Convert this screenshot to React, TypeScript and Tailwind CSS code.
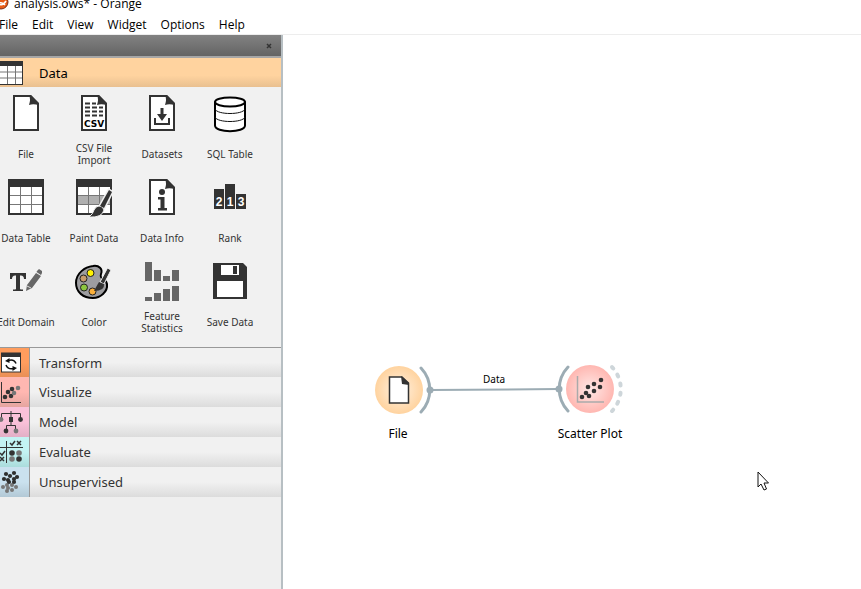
import type { ReactNode } from "react";

const INK = "#333333";

function Page({ children }: { children?: ReactNode }) {
  return (
    <>
      <path d="M8 3H24.5L32 10.500V37H8Z" fill="#fff" stroke={INK} strokeWidth="2" />
      <path d="M23 2H25L33 10.500V12.500Q28 10.500 23 12Q25 6 23 2Z" fill={INK} />
      {children}
    </>
  );
}

function TableGrid({ shaded = false }: { shaded?: boolean }) {
  return (
    <>
      <rect x="2" y="2" width="36" height="36" fill={INK} />
      <rect x="4" y="10" width="32" height="26" fill="#fff" />
      {shaded && <rect x="4" y="19" width="32" height="8" fill="#b0b0b0" />}
      <path d="M14.500 10V36M25.500 10V36M4 18.500H36M4 27.500H36" stroke="#777" fill="none" />
    </>
  );
}

function Brush() {
  return (
    <>
      <path d="M35 13L38 15L30 31L26 29Z" fill={INK} stroke="#f1f1f1" strokeWidth="3" />
      <path d="M25 29Q29 29 30 33Q28 41 15 40Q19 37 20 33Q22 29 25 29Z" fill={INK} stroke="#f1f1f1" />
      <path d="M35 13L38 15L30 31L26 29Z" fill={INK} />
    </>
  );
}

const icons: Record<string, ReactNode> = {
  File: <Page />,
  "CSV File Import": (
    <Page>
      <path d="M11 10.500H22M11 14.500H29M11 18.500H29M11 22.500H29" stroke={INK} strokeWidth="2" strokeDasharray="5 2" />
      <text x="20" y="34" textAnchor="middle" fill="#000" className="font-['DejaVu_Sans'] text-[9px] font-bold">CSV</text>
    </Page>
  ),
  Datasets: (
    <Page>
      <path d="M18.500 15H21.500V21H25L20 28L15 21H18.500Z" fill={INK} />
      <path d="M13 25V31H27V25" stroke={INK} strokeWidth="2" fill="none" />
    </Page>
  ),
  "SQL Table": (
    <>
      <path d="M5 8.500V32.500C5 40 35 40 35 32.500V8.500" fill="#fff" stroke="#000" strokeWidth="2" />
      <ellipse cx="20" cy="9" rx="15" ry="4.500" fill="#fff" stroke="#000" strokeWidth="2" />
      <path d="M5 16C7 22 33 22 35 16M5 24C7 30 33 30 35 24" fill="none" stroke="#111" />
    </>
  ),
  "Data Table": <TableGrid />,
  "Paint Data": (
    <>
      <TableGrid shaded />
      <Brush />
    </>
  ),
  "Data Info": (
    <Page>
      <circle cx="20" cy="15" r="3" fill={INK} />
      <path d="M16 20H22.500V31H25V33.500H16V31H18.500V22.500H16Z" fill={INK} />
    </Page>
  ),
  Rank: (
    <>
      <path d="M4 12H14V32H4ZM15 7H25V32H15ZM26 17H36V32H26Z" fill={INK} />
      <g fill="#fff" textAnchor="middle" className="font-['Liberation_Sans'] text-[12px] font-bold">
        <text x="9" y="29">2</text>
        <text x="20" y="29">1</text>
        <text x="31" y="29">3</text>
      </g>
    </>
  ),
  "Edit Domain": (
    <>
      <path d="M4 12H20V18H18Q18 14 14 14.500V28Q14 28.500 17 28.500V30H7V28.500Q10 28.500 10 28V14.500Q6 14 6 18H4Z" fill={INK} />
      <path d="M20 30L21 24L30 12L35 15L26 27ZM31 10L33 8L36 10V12L35 14L30.500 11Z" fill="#666" />
      <path d="M21 25L25 27" stroke="#ddd" />
    </>
  ),
  Color: (
    <>
      <path d="M19 5C25 4 29 8 27 13C25 19 32 17 33 23C34 31 26 37 19 37C9 37 2 31 2 22C2 12 11 6 19 5Z" fill="#9d9da0" stroke="#000" strokeWidth="2" />
      <g stroke="#222">
        <circle cx="16.500" cy="12" r="3.500" fill="#fff200" />
        <circle cx="9.500" cy="17.500" r="3.500" fill="#c69c6d" />
        <circle cx="10" cy="26.500" r="3.500" fill="#8cc63f" />
        <circle cx="18.500" cy="30.500" r="3.500" fill="#fbb03b" />
      </g>
      <path d="M33.500 7L37 9L30 23L26 21Z" fill={INK} stroke="#f1f1f1" />
      <path d="M25 21L30 23Q31 30 20 30Q22 26 25 21Z" fill={INK} />
    </>
  ),
  "Feature Statistics": (
    <path
      d="M3 1H10V20H3ZM12 9H19V20H12ZM21 15H28V20H21ZM30 9H37V20H30ZM3 36H10V40H3ZM12 32H19V40H12ZM21 28H28V40H21ZM30 25H37V40H30Z"
      fill="#666"
    />
  ),
  "Save Data": (
    <>
      <path d="M3 2H33L37 6V38H3Z" fill={INK} />
      <path d="M11 4H29V14H11ZM7 20H33V36H7Z" fill="#fff" />
      <rect x="23" y="5" width="4" height="8" fill={INK} />
    </>
  ),
};

function Dots({ points, r, fill }: { points: number[][]; r: number; fill: string }) {
  return (
    <g fill={fill}>
      {points.map(([x, y]) => (
        <circle key={`${x}-${y}`} cx={x} cy={y} r={r} />
      ))}
    </g>
  );
}

const sections: { name: string; tint: string; icon: ReactNode }[] = [
  {
    name: "Transform",
    tint: "from-[#ff9d5e] to-[#e98f56]",
    icon: (
      <>
        <rect x="1.500" y="5" width="19" height="19" fill="#fff" stroke={INK} />
        <path d="M1 5H21V9H1Z" fill={INK} />
        <path d="M8 12.500Q14 10.500 16 15.500M14 20.500Q8 22 6 17" fill="none" stroke="#111" strokeWidth="1.500" />
        <path d="M9.500 10V15L5 13ZM12.500 18V23L17 20Z" fill="#111" />
      </>
    ),
  },
  {
    name: "Visualize",
    tint: "from-[#ffb7b1] to-[#e5a5a0]",
    icon: (
      <>
        <path d="M1.500 5V25.500H21" fill="none" stroke={INK} />
        <Dots points={[[5, 20], [11, 19], [8, 15], [12, 12]]} r={2.3} fill={INK} />
        <Dots points={[[14, 16], [18, 11]]} r={2.3} fill="#777" />
      </>
    ),
  },
  {
    name: "Model",
    tint: "from-[#fac1d9] to-[#e2afc6]",
    icon: (
      <>
        <path d="M1.500 12V6.500H20.500V12M11 4V18M6.500 24V18.500H15.500V24" fill="none" stroke={INK} />
        <rect x="9" y="10" width="4" height="5" fill={INK} />
        <Dots points={[[20.5, 12.5], [6, 24]]} r={2.4} fill={INK} />
        <Dots points={[[1, 12.5], [16, 24]]} r={2.4} fill="#777" />
      </>
    ),
  },
  {
    name: "Evaluate",
    tint: "from-[#c3f3f3] to-[#aadcdc]",
    icon: (
      <>
        <path d="M0 10.500H23M6.500 4V26" stroke={INK} />
        <path d="M10 6L12 8L15 4M17 4L21 8M21 4L17 8M0 16L2 18L5 14M0 20L4 24M4 20L0 24" stroke={INK} strokeWidth="1.500" fill="none" />
        <Dots points={[[12, 16], [19, 22]]} r={2.8} fill={INK} />
        <Dots points={[[19, 16], [12, 22]]} r={2.8} fill="#777" />
      </>
    ),
  },
  {
    name: "Unsupervised",
    tint: "from-[#cae1ef] to-[#b3c9d6]",
    icon: (
      <>
        <Dots points={[[7, 18], [12, 18], [3, 20], [8, 21], [16, 20], [12, 23], [7, 24]]} r={2} fill="#777" />
        <Dots points={[[6, 7], [14, 6], [10, 9], [17, 10], [4, 12], [8, 13], [14, 12], [9, 15], [14, 15]]} r={2.1} fill="#2e2e2e" />
      </>
    ),
  },
];

const menus = ["File", "Edit", "View", "Widget", "Options", "Help"];

function Toolbox() {
  return (
    <aside className="flex w-[283px] shrink-0 flex-col overflow-hidden border-r-2 border-[#b7bfc3] bg-[#efefef] font-['Noto_Sans',sans-serif] text-[#333]">
      <div className="flex h-[21px] shrink-0 items-center justify-end bg-linear-to-b from-[#828282] to-[#646464] pr-2">
        <button aria-label="Close toolbox" className="flex size-2 items-center justify-center">
          <svg width="6" height="6" viewBox="0 0 6 6"><path d="M1 1L5 5M5 1L1 5" stroke="#333" strokeWidth="1.500" /></svg>
        </button>
      </div>
      <button className="flex h-[31px] shrink-0 items-center border-t-2 border-[#a6a6a6] bg-linear-to-b from-[#ffd39f] from-60% to-[#e9c090] text-left text-[13px] text-black">
        <svg width="39" height="28" viewBox="0 0 39 28">
          <rect x="-1" y="2" width="24" height="24" fill={INK} />
          <rect x="0" y="7" width="22" height="18" fill="#fff" />
          <path d="M7.500 7V25M15.500 7V25M0 13H22M0 19H22" stroke="#777" />
        </svg>
        <span className="pt-0.5">Data</span>
      </button>
      <div className="bg-[#f1f1f1] pb-2">
        <div className="-ml-2 grid w-[272px] grid-cols-4">
          {Object.entries(icons).map(([name, icon]) => (
            <button key={name} className="flex h-[84px] flex-col items-center gap-[9px] pt-1.5">
              <svg width="40" height="40" viewBox="0 0 40 40" className="shrink-0 overflow-visible">{icon}</svg>
              <span className="flex h-6 max-w-16 items-center justify-center text-center text-[10px] leading-3">{name}</span>
            </button>
          ))}
        </div>
      </div>
      <div className="flex flex-col border-t border-[#999]">
        {sections.map(({ name, tint, icon }) => (
          <button key={name} className="flex h-[30px] items-stretch bg-linear-to-b from-[#f1f1f1] from-50% to-[#dcdcdc] text-left text-[13px] first:h-[29px]">
            <span className={`mr-[9px] w-[30px] border-r border-[#999] bg-linear-to-b from-50% ${tint}`}>
              <svg width="29" height="29" viewBox="0 0 29 29">{icon}</svg>
            </span>
            <span className="self-center pt-0.5">{name}</span>
          </button>
        ))}
      </div>
    </aside>
  );
}

function Workflow() {
  return (
    <main className="relative min-w-0 flex-1 overflow-hidden bg-white font-['Noto_Sans',sans-serif] text-black">
      <svg width="400" height="420" viewBox="0 0 400 420" className="absolute top-0 left-0">
        <defs>
          <radialGradient id="fileTint"><stop offset="0" stopColor="#fff1e1" /><stop offset="1" stopColor="#ffd39f" /></radialGradient>
          <radialGradient id="plotTint"><stop offset="0" stopColor="#ffe8e6" /><stop offset="1" stopColor="#ffb7b1" /></radialGradient>
        </defs>
        <g fill="none" stroke="#9cacb4" strokeLinecap="round">
          <path d="M147 355L276 354" strokeWidth="2" />
          <path d="M138 333A32 32 0 0 1 138 377M285 332A32 32 0 0 0 285 376" strokeWidth="3" />
          <path d="M329 332A32 32 0 0 1 329 376" stroke="#ced6da" strokeWidth="4" strokeDasharray="2 7.300" />
        </g>
        <circle cx="147" cy="355" r="3.500" fill="#9cacb4" />
        <circle cx="276" cy="354" r="3.500" fill="#9cacb4" />
        <circle cx="116" cy="355" r="24" fill="url(#fileTint)" />
        <path d="M106.500 342H119L125.500 348V368H106.500Z" fill="#fff" stroke={INK} strokeWidth="1.500" />
        <path d="M118 341L126 348V350L119 349Z" fill={INK} />
        <circle cx="307" cy="354" r="24" fill="url(#plotTint)" />
        <path d="M294.500 341V367H321" fill="none" stroke="#aaa" strokeWidth="1.500" />
        <Dots points={[[299, 362], [306, 361], [303, 358], [311, 356], [305, 352], [311, 349], [317, 352], [318, 345]]} r={2.3} fill={INK} />
      </svg>
      <span className="absolute top-[336px] left-[200px] text-[10px] leading-4">Data</span>
      <span className="absolute top-[391px] left-[115px] -translate-x-1/2 text-xs leading-4">File</span>
      <span className="absolute top-[391px] left-[307px] -translate-x-1/2 text-xs leading-4 whitespace-nowrap">Scatter Plot</span>
      <svg width="14" height="20" viewBox="0 0 14 20" className="absolute top-[436px] left-[474px]">
        <path d="M1 1V16L4 13L7 19L9.500 18L7 12H11.500Z" fill="#fff" stroke="#111" />
      </svg>
    </main>
  );
}

export default function App() {
  return (
    <div className="flex h-screen flex-col overflow-hidden bg-white font-['Open_Sans',sans-serif] text-xs text-black">
      <header className="flex h-[14px] shrink-0 items-end overflow-hidden">
        <svg width="14" height="14" viewBox="0 0 14 14" className="shrink-0">
          <circle cx="1" cy="2" r="7" fill="#e85b16" />
          <path d="M-4 0Q1 9 6 1M-3 4Q2 1 5 5" fill="none" stroke="#fff" strokeWidth="1.500" />
          <circle cx="1" cy="2" r="7" fill="none" stroke="#7b2f18" />
        </svg>
        <h1 className="pb-[2px] leading-4">analysis.ows* - Orange</h1>
      </header>
      <nav className="flex h-[21px] shrink-0 items-center border-b border-[#ededed]">
        <div className="-ml-2 flex pt-0.5">
          {menus.map((name) => (
            <button key={name} className="px-[7px] leading-4">{name}</button>
          ))}
        </div>
      </nav>
      <div className="flex min-h-0 flex-1">
        <Toolbox />
        <Workflow />
      </div>
    </div>
  );
}
